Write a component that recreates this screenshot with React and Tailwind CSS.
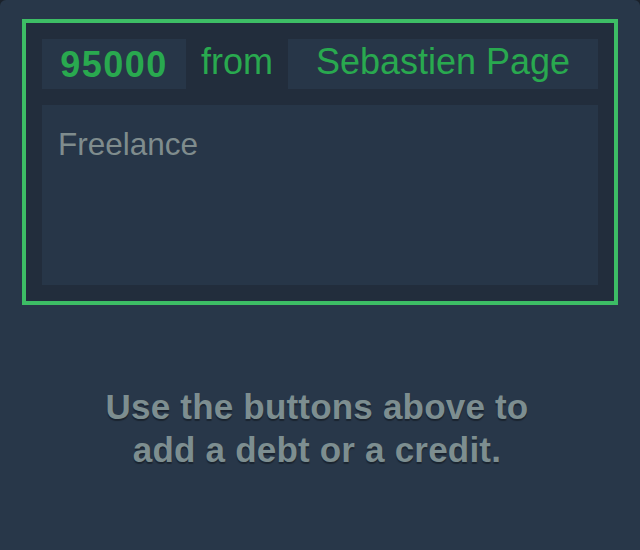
import React from "react";

const App = () => {
  return (
    <div className="w-[640px] h-[550px] bg-[#1b222b]">
      <div
        className="w-full h-full bg-[#283749] rounded-t-[6px] pt-[19px] px-[22px]"
        style={{ fontFamily: '"Liberation Sans", Arial, sans-serif' }}
      >
        <div className="border-[4px] border-[#3dbd65] bg-[#222d3c] p-4 pb-[16px]">
          <div className="flex items-start gap-[15px] h-[50px]">
            <div className="w-[144px] h-[50px] bg-[#273648] text-[#29a94f] text-[36px] font-bold leading-[52px] text-center tracking-[1.5px]">
              95000
            </div>
            <div className="h-[50px] text-[#29a94f] text-[36px] leading-[46px]">from</div>
            <div className="flex-1 h-[50px] bg-[#273648] text-[#29a94f] text-[36px] leading-[46px] text-center">
              Sebastien Page
            </div>
          </div>
          <div className="mt-4 h-[180px] bg-[#273648] p-4">
            <p className="text-[#7f8c8d] text-[31.5px]">Freelance</p>
          </div>
        </div>

        <p
          className="mt-[80px] pr-[6px] text-center text-[35px] leading-[43px] font-bold tracking-[0.2px] text-[#7d8e90]"
          style={{ textShadow: "0 2px 1px rgba(0,0,0,0.35)" }}
        >
          Use the buttons above to
          <br />
          add a debt or a credit.
        </p>
      </div>
    </div>
  );
};

export default App;
